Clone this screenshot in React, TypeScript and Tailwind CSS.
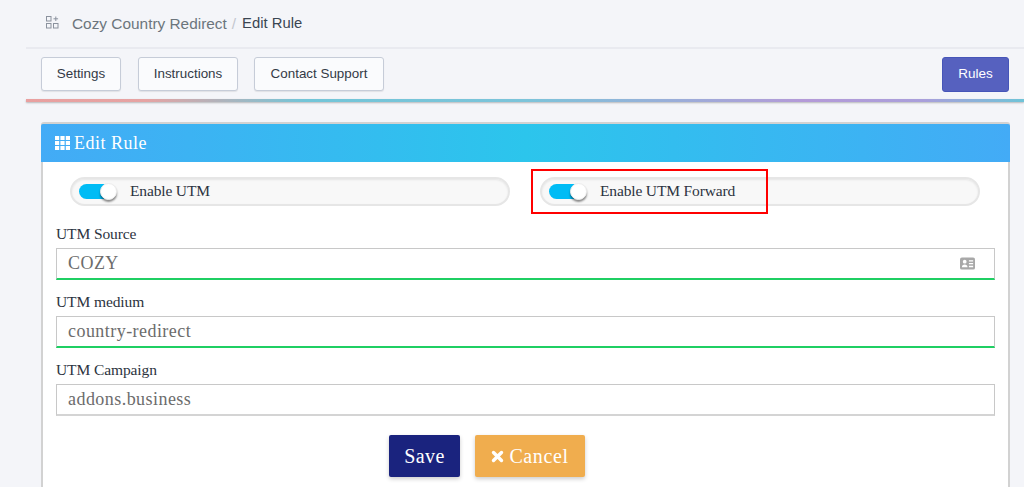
import React from "react";

const serif = "font-['Liberation_Serif',serif]";
const sans = "font-['Liberation_Sans',Arial,sans-serif]";

function Toggle({ label }: { label: string }) {
  return (
    <div className="relative flex h-[29px] w-[440px] items-center rounded-full border-2 border-[#e6e6e6] bg-[#f8f8f8] pl-[7px] shadow-[inset_0_1px_2px_rgba(0,0,0,0.08)]">
      <div className="relative h-[15px] w-[32px] rounded-full bg-[#00bcf5]">
        <div className="absolute left-[21px] top-[-1px] h-[17px] w-[17px] rounded-full border border-[#eeeeee] bg-white shadow-[0_2px_2px_rgba(0,0,0,0.45)]" />
      </div>
      <span className={`${serif} mb-[2px] ml-[19px] text-[15.5px] leading-none tracking-[-0.15px] text-[#2c3340]`}>{label}</span>
    </div>
  );
}

function Field({ label, value, valid, icon }: { label: string; value: string; valid?: boolean; icon?: boolean }) {
  return (
    <div className="mb-[11px]">
      <div className={`${serif} mb-[5px] h-[20px] pt-[1px] text-[15.5px] leading-[20px] tracking-[-0.1px] text-[#2c3340]`}>{label}</div>
      <div className={`flex h-[32px] items-center justify-between border border-[#c8c8c8] pl-[11px] pr-[19px] ${valid ? "border-b-2 border-b-[#1fcf63]" : "border-b-2 border-b-[#d4d4d4]"}`}>
        <span className={`${serif} text-[18px] tracking-[0.45px] text-[#6c6c6c]`}>{value}</span>
        {icon && (
          <svg width="15" height="13" viewBox="0 0 16 13">
            <rect width="16" height="13" rx="2" fill="#a8a8a8" />
            <circle cx="5" cy="4.5" r="2" fill="#fff" />
            <path d="M2 10.5c0-2 1.2-3 3-3s3 1 3 3z" fill="#fff" />
            <path d="M9.5 3h4.5v1.4H9.5zM9.5 6h4.5v1.4H9.5zM9.5 9h4.5v1.4H9.5z" fill="#fff" />
          </svg>
        )}
      </div>
    </div>
  );
}

function ToolButton({ children, className }: { children: string; className: string }) {
  return (
    <button className={`${sans} h-[34px] rounded-[3px] border border-[#c6ccd8] bg-[#fafbfd] text-[13.4px] text-[#333a46] shadow-[0_1px_1px_rgba(0,0,0,0.08)] ${className}`}>
      {children}
    </button>
  );
}

export default function App() {
  return (
    <div className="relative h-[487px] w-full overflow-hidden bg-[#f4f5f9] pl-[26px]">
      <div className={`${sans} flex h-[49px] items-center border-b-2 border-[#e9eaf0] pl-[20px] text-[15.4px]`}>
        <svg width="13" height="13" viewBox="0 0 13 13" fill="none" stroke="#8b929e" strokeWidth="1" className="mr-[13px] mb-[2px]">
          <rect x="0.5" y="0.5" width="4.5" height="4.5" />
          <rect x="0.5" y="7.5" width="4.5" height="4.5" />
          <rect x="7.5" y="7.5" width="4.5" height="4.5" />
          <path d="M9.8 0.5v4.5M7.5 2.8h4.6" />
        </svg>
        <span className="text-[#6c757d]">Cozy Country Redirect</span>
        <span className="ml-[5px] mr-[6px] text-[#c3c7cf]">/</span>
        <span className="text-[14.8px] text-[#3a4552]">Edit Rule</span>
      </div>

      <div className="flex h-[50px] items-center justify-between pl-[15px] pr-[15px]">
        <div className="flex">
          <ToolButton className="w-[80px]">Settings</ToolButton>
          <ToolButton className="ml-[17px] w-[100px]">Instructions</ToolButton>
          <ToolButton className="ml-[16px] w-[130px]">Contact Support</ToolButton>
        </div>
        <button className={`${sans} h-[35px] w-[67px] rounded-[3px] border border-[#4655b8] bg-[#5661bf] text-[13.5px] text-white`}>
          Rules
        </button>
      </div>

      <div className="h-[3px] bg-[linear-gradient(to_right,#e9a0a0_0%,#e6a3a3_12%,#72c5d8_28%,#7cc4da_50%,#b49ad8_78%,#a99fdb_90%,#6fc4d8_100%)] shadow-[0_1px_2px_rgba(0,0,0,0.25)]" />

      <div className="ml-[15px] mr-[14px] mt-[20px] h-[400px] rounded-t-[3px] border-2 border-b-0 border-[#d2d2d2] bg-white">
        <div className={`${serif} -mx-[2px] flex h-[38px] items-center rounded-t-[2px] bg-[linear-gradient(to_right,#43abf6_0%,#2cc5ec_50%,#43abf6_100%)] pl-[14px] text-[18px] tracking-[0.5px] text-white`}>
          <svg width="15" height="14" viewBox="0 0 15 14" fill="#fff" className="mr-[4px]">
            <path d="M0 0h4.2v4H0zM5.4 0h4.2v4H5.4zM10.8 0H15v4h-4.2zM0 5h4.2v4H0zM5.4 5h4.2v4H5.4zM10.8 5H15v4h-4.2zM0 10h4.2v4H0zM5.4 10h4.2v4H5.4zM10.8 10H15v4h-4.2z" />
          </svg>
          Edit Rule
        </div>

        <div className="flex gap-[30px] pl-[27px] pt-[15px]">
          <Toggle label="Enable UTM" />
          <Toggle label="Enable UTM Forward" />
        </div>

        <div className="pl-[13px] pr-[13px] pt-[17px]">
          <Field label="UTM Source" value="COZY" valid icon />
          <Field label="UTM medium" value="country-redirect" valid />
          <Field label="UTM Campaign" value="addons.business" />
        </div>

        <div className="flex gap-[15px] pl-[346px] pt-[8px]">
          <button className={`${serif} h-[42px] w-[71px] rounded-[2px] bg-[#1a237e] text-[20px] tracking-[0.4px] text-white shadow-[0_2px_4px_rgba(0,0,0,0.2)]`}>
            Save
          </button>
          <button className={`${serif} flex h-[42px] w-[110px] items-center justify-center rounded-[2px] bg-[#f0ad4e] text-[20px] tracking-[0.6px] text-white shadow-[0_2px_4px_rgba(0,0,0,0.2)]`}>
            <svg width="13" height="13" viewBox="0 0 13 13" stroke="#fff" strokeWidth="3.4" strokeLinecap="round" className="mr-[5px]">
              <path d="M2.5 2.5l8 8M10.5 2.5l-8 8" />
            </svg>
            Cancel
          </button>
        </div>
      </div>

      <div className="absolute left-[531px] top-[169px] h-[45px] w-[237px] border-2 border-[#ff0000]" />
    </div>
  );
}
